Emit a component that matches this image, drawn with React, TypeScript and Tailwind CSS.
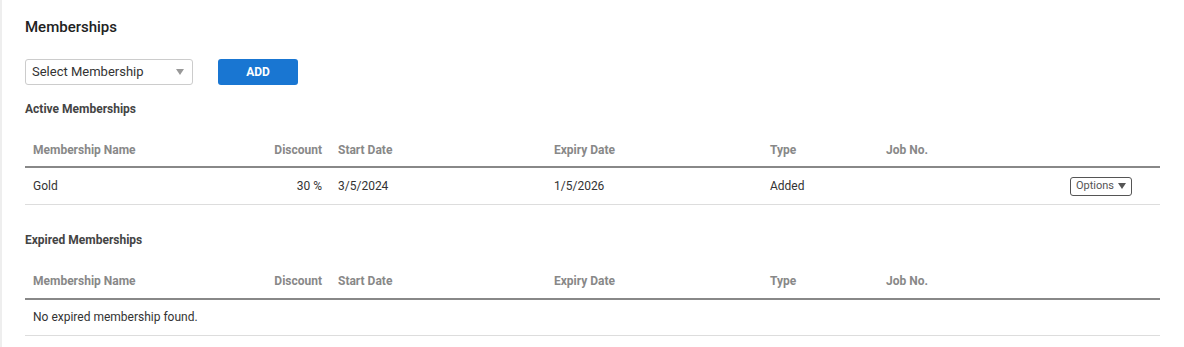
interface Membership {
  name: string;
  discount: number;
  startDate: string;
  expiryDate: string;
  type: string;
  jobNo: string;
}

const active: Membership[] = [
  { name: 'Gold', discount: 30, startDate: '3/5/2024', expiryDate: '1/5/2026', type: 'Added', jobNo: '' },
];

const expired: Membership[] = [];

const HeaderRow = () => (
  <thead>
    <tr className="border-b-2 border-[#888] text-[12px] font-bold text-[#888]">
      <th className="h-[34px] w-[220px] px-2 text-left font-bold">Membership Name</th>
      <th className="w-[85px] px-2 text-right font-bold">Discount</th>
      <th className="w-[216px] px-2 text-left font-bold">Start Date</th>
      <th className="w-[216px] px-2 text-left font-bold">Expiry Date</th>
      <th className="w-[116px] px-2 text-left font-bold">Type</th>
      <th className="w-[150px] px-2 text-left font-bold">Job No.</th>
      <th className="px-2" />
    </tr>
  </thead>
);

const MembershipTable = ({ rows, empty }: { rows: Membership[]; empty: string }) => (
  <table className="w-full table-fixed border-collapse">
    <HeaderRow />
    <tbody className="text-[12px] text-[#333]">
      {rows.length === 0 && (
        <tr className="border-b border-[#ddd]">
          <td colSpan={7} className="h-[37px] px-2">{empty}</td>
        </tr>
      )}
      {rows.map(m => (
        <tr key={m.name} className="border-b border-[#ddd]">
          <td className="h-[37px] px-2">{m.name}</td>
          <td className="px-2 text-right">{m.discount} %</td>
          <td className="px-2">{m.startDate}</td>
          <td className="px-2">{m.expiryDate}</td>
          <td className="px-2">{m.type}</td>
          <td className="px-2">{m.jobNo}</td>
          <td className="pr-[28px] text-right">
            <button className="inline-flex h-[19px] items-center gap-1 rounded-[3px] border border-[#555] bg-white px-[5px] text-[11px] text-[#555]">
              Options
              <svg width="8" height="6" viewBox="0 0 8 6"><path d="M0 0h8L4 6z" fill="#555" /></svg>
            </button>
          </td>
        </tr>
      ))}
    </tbody>
  </table>
);

export default function App() {
  return (
    <div className="min-h-[347px] border-l-2 border-[#eee] bg-white pr-6 pl-[23px] font-['Roboto',sans-serif]">
      <h1 className="pt-[17px] text-[15px] font-medium leading-[20px] text-[#222]">Memberships</h1>

      <div className="mt-[22px] flex items-center gap-[25px]">
        <div className="relative flex h-[26px] w-[168px] items-center rounded-[3px] border border-[#ccc] pl-[6px] text-[13px] text-[#333]">
          Select Membership
          <svg className="absolute right-[8px]" width="8" height="6" viewBox="0 0 8 6"><path d="M0 0h8L4 6z" fill="#999" /></svg>
        </div>
        <button className="h-[26px] w-[80px] rounded-[3px] bg-[#1976d2] text-[12px] font-bold text-white">ADD</button>
      </div>

      <h2 className="mt-[16px] text-[12px] font-bold leading-[16px] text-[#444]">Active Memberships</h2>
      <div className="mt-[16px]">
        <MembershipTable rows={active} empty="No active membership found." />
      </div>

      <h2 className="mt-[27px] text-[12px] font-bold leading-[16px] text-[#444]">Expired Memberships</h2>
      <div className="mt-[17px]">
        <MembershipTable rows={expired} empty="No expired membership found." />
      </div>
    </div>
  );
}
